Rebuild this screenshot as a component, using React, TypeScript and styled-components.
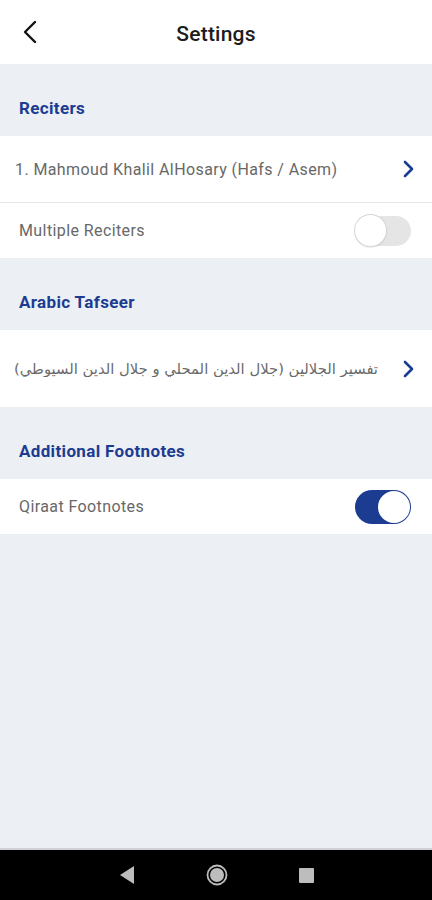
import React from "react";
import styled, { createGlobalStyle } from "styled-components";

const GlobalStyle = createGlobalStyle`
  html, body { margin: 0; padding: 0; }
  body { font-family: Roboto, "Noto Sans", "DejaVu Sans", sans-serif; background: #eceff3; }
  * { box-sizing: border-box; }
`;

const BLUE = "#1c3c92";

const Page = styled.div`
  width: 432px;
  height: 900px;
  display: flex;
  flex-direction: column;
  background: #eceff3;
  overflow: hidden;
`;

const Header = styled.header`
  height: 64px;
  flex: none;
  background: #ffffff;
  display: grid;
  grid-template-columns: 64px 1fr 64px;
  align-items: center;
`;

const BackButton = styled.button`
  border: 0;
  background: transparent;
  padding: 0 0 0 22px;
  height: 64px;
  display: flex;
  align-items: center;
  cursor: pointer;
`;

const Title = styled.h1`
  margin: 0;
  text-align: center;
  font-family: Roboto, sans-serif;
  font-weight: 500;
  font-size: 21px;
  letter-spacing: 0.2px;
  color: #1c1c1c;
  padding-top: 4px;
`;

const Content = styled.main`
  flex: 1;
  display: flex;
  flex-direction: column;
`;

const SectionTitle = styled.div`
  height: 72px;
  flex: none;
  display: flex;
  align-items: flex-end;
  padding: 0 19px 18px;
  font-family: Roboto, sans-serif;
  font-weight: 700;
  font-size: 17px;
  letter-spacing: 0.35px;
  line-height: 20px;
  color: ${BLUE};
`;

const Row = styled.div<{ $h: number; $divider?: boolean; $pl?: number }>`
  height: ${(p) => p.$h}px;
  flex: none;
  background: #ffffff;
  display: flex;
  align-items: center;
  justify-content: space-between;
  gap: 12px;
  padding: 0 21px 0 ${(p) => p.$pl ?? 19}px;
  border-bottom: ${(p) => (p.$divider ? "1px solid #e6e8ea" : "none")};
`;

const ChevronRow = styled(Row)`
  padding-right: 18px;
`;

const RowLabel = styled.span`
  font-family: Roboto, sans-serif;
  font-size: 16px;
  letter-spacing: 0.4px;
  color: #686868;
  white-space: nowrap;
  overflow: hidden;
`;

const ArabicLabel = styled.span`
  flex: 1;
  direction: rtl;
  text-align: right;
  font-family: "DejaVu Sans", sans-serif;
  font-size: 14.8px;
  color: #6a6a6a;
  white-space: nowrap;
  overflow: hidden;
  margin-left: -5px;
  margin-right: 12px;
`;

const Track = styled.div<{ $on: boolean }>`
  width: 56px;
  height: ${(p) => (p.$on ? 34 : 30)}px;
  border-radius: 17px;
  background: ${(p) => (p.$on ? BLUE : "#e5e5e5")};
  display: flex;
  align-items: center;
  justify-content: ${(p) => (p.$on ? "flex-end" : "flex-start")};
  flex: none;
`;

const Knob = styled.div<{ $on: boolean }>`
  width: ${(p) => (p.$on ? 32 : 31)}px;
  height: ${(p) => (p.$on ? 32 : 31)}px;
  border-radius: 50%;
  background: #ffffff;
  margin: 0 ${(p) => (p.$on ? 1 : 0)}px;
  box-shadow: ${(p) =>
    p.$on ? "none" : "0 0 0 1px #d6d6d6, 0 1px 2px rgba(0,0,0,0.2)"};
`;

const NavBar = styled.nav`
  height: 52px;
  flex: none;
  background: #000000;
  border-top: 2px solid #cfd1d4;
  display: flex;
  align-items: center;
  justify-content: center;
  gap: 71px;
`;

const NavIcon = styled.svg`
  display: block;
`;

const Chevron = () => (
  <svg width="12" height="18" viewBox="0 0 12 18" fill="none">
    <path d="M3 2 L10 9 L3 16" stroke={BLUE} strokeWidth="2.6" strokeLinecap="round" strokeLinejoin="round" />
  </svg>
);

const Toggle = ({ on }: { on: boolean }) => (
  <Track $on={on}>
    <Knob $on={on} />
  </Track>
);

export default function App() {
  return (
    <>
      <GlobalStyle />
      <Page>
        <Header>
          <BackButton aria-label="Back">
            <svg width="16" height="24" viewBox="0 0 16 24" fill="none">
              <path d="M13 2 L3 12 L13 22" stroke="#111" strokeWidth="2.4" strokeLinecap="round" strokeLinejoin="round" />
            </svg>
          </BackButton>
          <Title>Settings</Title>
          <div />
        </Header>
        <Content>
          <SectionTitle>Reciters</SectionTitle>
          <ChevronRow $h={67} $divider $pl={15}>
            <RowLabel>1. Mahmoud Khalil AlHosary (Hafs / Asem)</RowLabel>
            <Chevron />
          </ChevronRow>
          <Row $h={55}>
            <RowLabel>Multiple Reciters</RowLabel>
            <Toggle on={false} />
          </Row>
          <SectionTitle>Arabic Tafseer</SectionTitle>
          <ChevronRow $h={77}>
            <ArabicLabel>تفسير الجلالين (جلال الدين المحلي و جلال الدين السيوطي)</ArabicLabel>
            <Chevron />
          </ChevronRow>
          <SectionTitle>Additional Footnotes</SectionTitle>
          <Row $h={55}>
            <RowLabel>Qiraat Footnotes</RowLabel>
            <Toggle on={true} />
          </Row>
        </Content>
        <NavBar>
          <NavIcon width="16" height="20" viewBox="0 0 16 20">
            <path d="M15 1 L15 19 L1 10 Z" fill="#bdbdbd" />
          </NavIcon>
          <NavIcon width="22" height="22" viewBox="0 0 22 22">
            <circle cx="11" cy="11" r="9.5" fill="none" stroke="#bdbdbd" strokeWidth="1.8" />
            <circle cx="11" cy="11" r="7" fill="#bdbdbd" />
          </NavIcon>
          <NavIcon width="15" height="15" viewBox="0 0 15 15">
            <rect x="0" y="0" width="15" height="15" rx="1" fill="#bdbdbd" />
          </NavIcon>
        </NavBar>
      </Page>
    </>
  );
}
